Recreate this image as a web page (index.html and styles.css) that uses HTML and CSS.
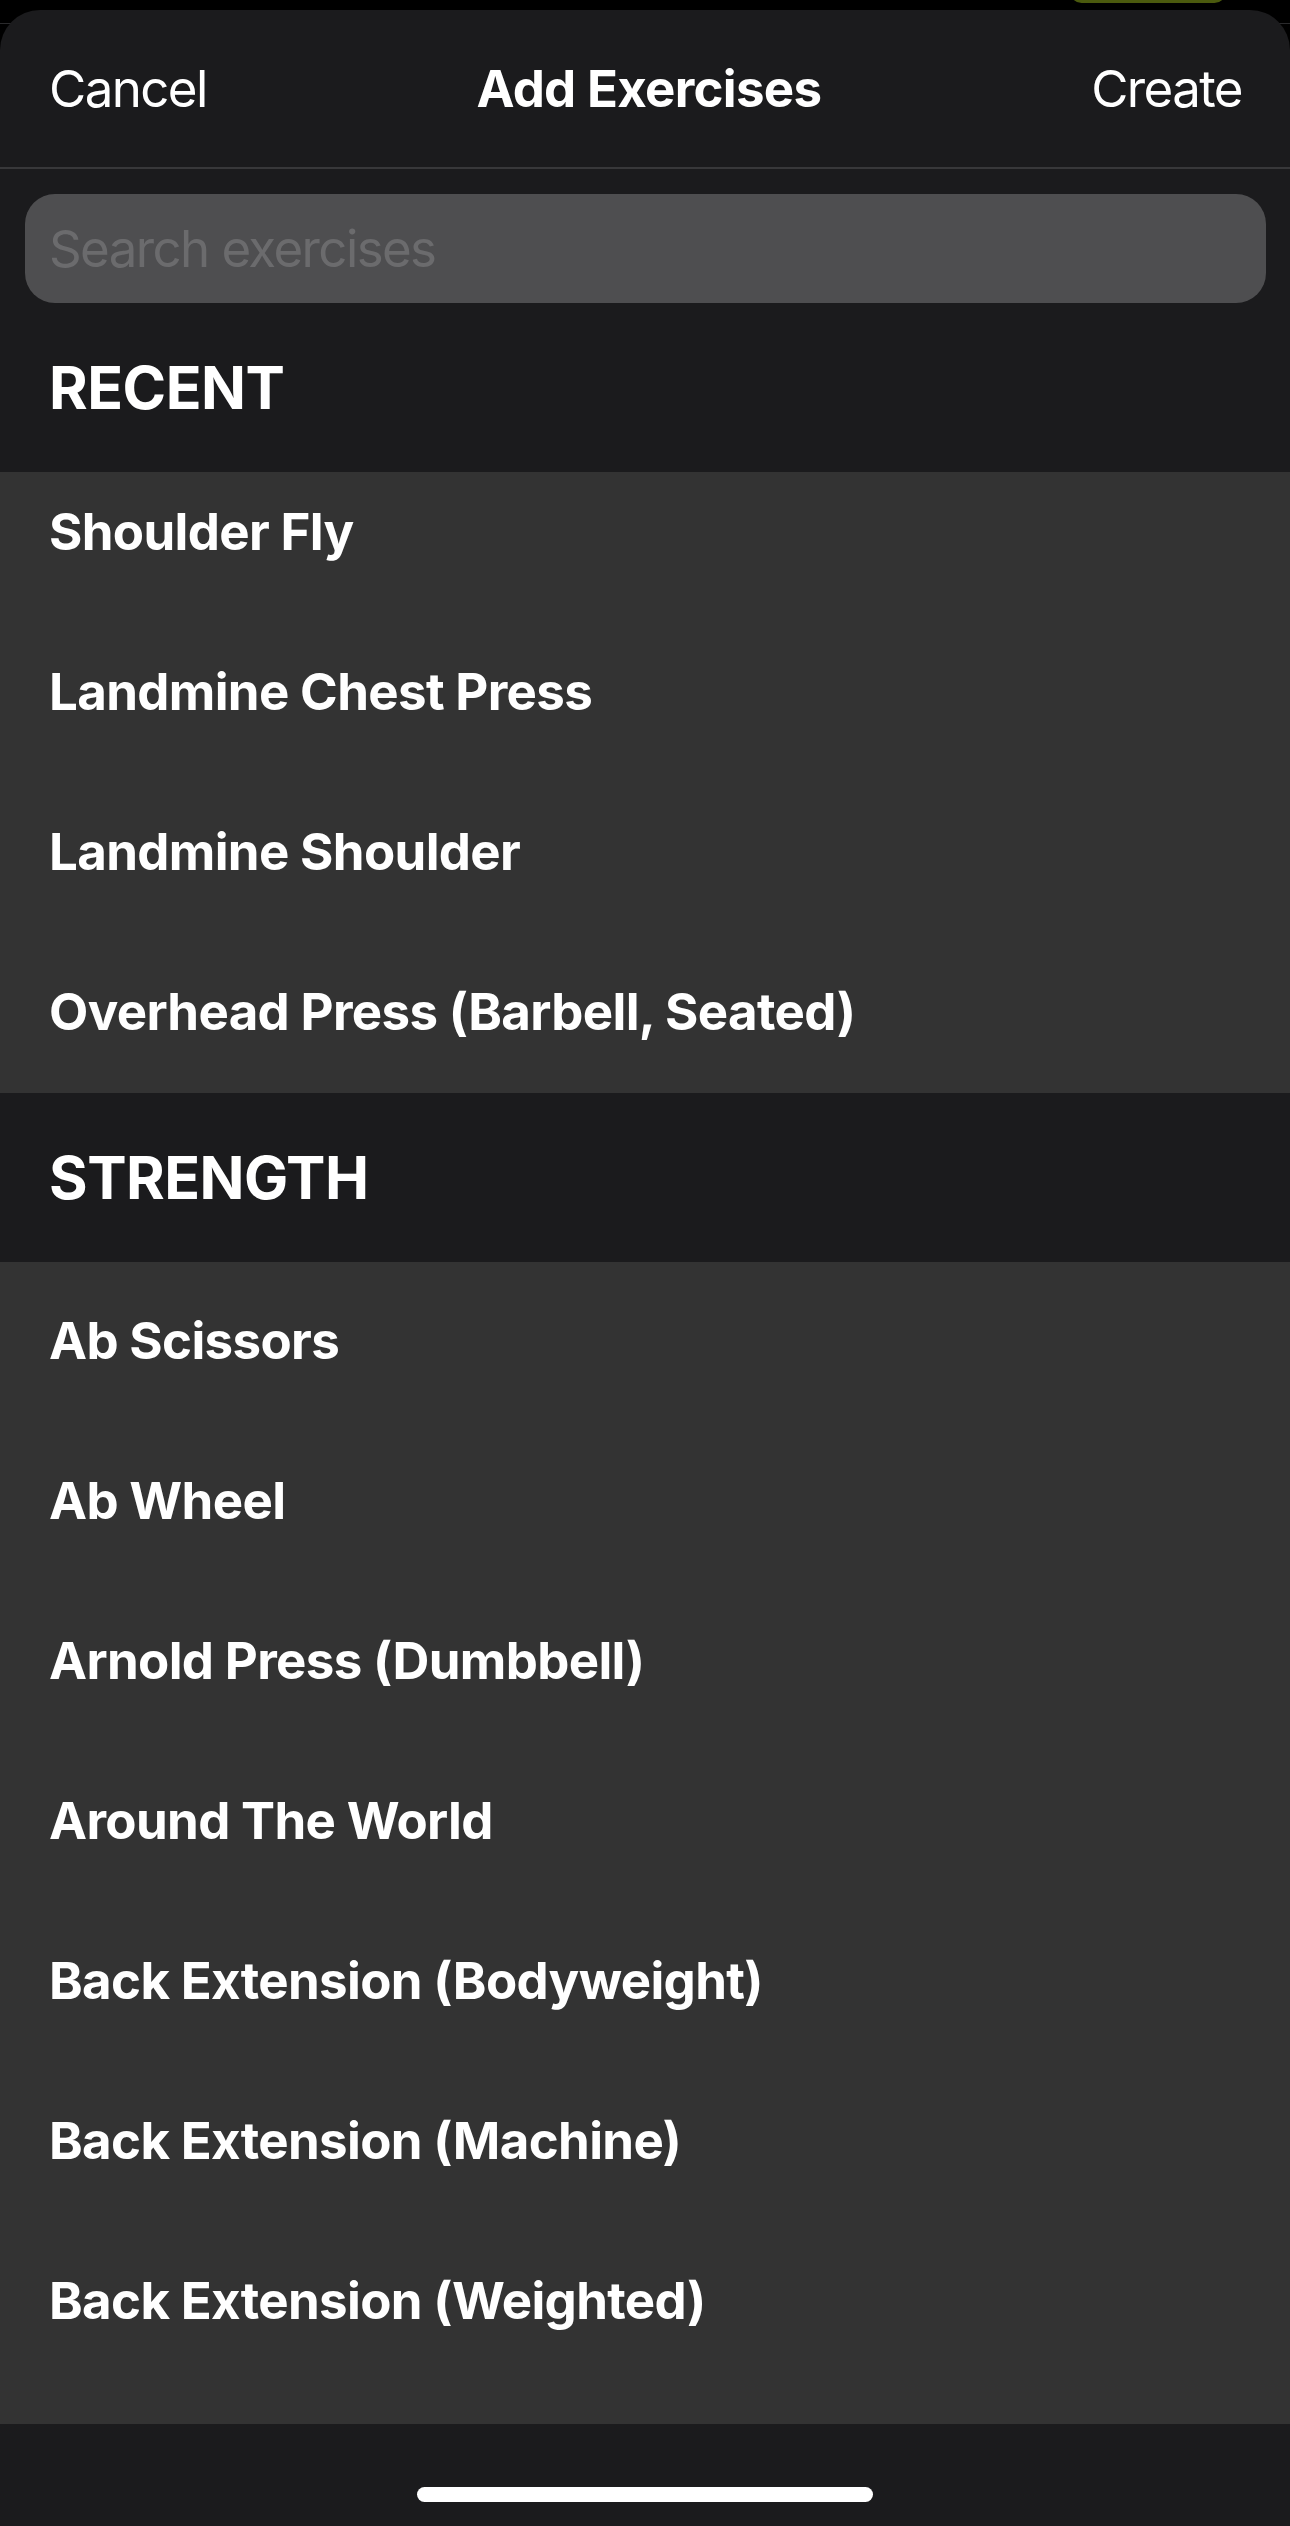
FILE: index.html
```html
<!DOCTYPE html>
<html lang="en">
<head>
<meta charset="utf-8">
<title>Add Exercises</title>
<link rel="stylesheet" href="styles.css">
</head>
<body>
<div class="backdrop">
  <div class="backdrop-pill"></div>
</div>
<div class="sheet">
  <header class="navbar">
    <span class="nav-btn">Cancel</span>
    <span class="nav-title">Add Exercises</span>
    <span class="nav-btn">Create</span>
  </header>
  <div class="divider"></div>
  <div class="search-wrap">
    <div class="search-field">Search exercises</div>
  </div>
  <div class="section-header">RECENT</div>
  <div class="list list-recent">
    <div class="list-inner scrolled">
      <div class="row">Shoulder Fly</div>
      <div class="row">Landmine Chest Press</div>
      <div class="row">Landmine Shoulder</div>
      <div class="row">Overhead Press (Barbell, Seated)</div>
    </div>
  </div>
  <div class="section-header">STRENGTH</div>
  <div class="list list-strength">
    <div class="list-inner shifted">
      <div class="row">Ab Scissors</div>
      <div class="row">Ab Wheel</div>
      <div class="row">Arnold Press (Dumbbell)</div>
      <div class="row">Around The World</div>
      <div class="row">Back Extension (Bodyweight)</div>
      <div class="row">Back Extension (Machine)</div>
      <div class="row">Back Extension (Weighted)</div>
    </div>
  </div>
  <div class="home-bar">
    <div class="home-indicator"></div>
  </div>
</div>
</body>
</html>
```

FILE: styles.css
```css
html, body {
  margin: 0;
  padding: 0;
}
body {
  background: #000;
  width: 1290px;
  height: 2526px;
  overflow: hidden;
  position: relative;
  font-family: Inter, "Liberation Sans", sans-serif;
  color: #fff;
}
.backdrop {
  position: absolute;
  top: 0;
  left: 0;
  right: 0;
  height: 24px;
  border-bottom: 1px solid #2a2a2c;
  box-sizing: border-box;
}
.backdrop-pill {
  position: absolute;
  top: -20px;
  left: 1070px;
  width: 156px;
  height: 23px;
  border-radius: 12px;
  background: #4b5a0e;
}
.sheet {
  position: relative;
  margin-top: 10px;
  height: 2516px;
  background: #1b1b1d;
  border-radius: 40px 40px 0 0;
  display: flex;
  flex-direction: column;
  overflow: hidden;
}
.navbar {
  height: 157px;
  flex: none;
  box-sizing: border-box;
  padding: 48px 48px 0 49px;
  display: flex;
  justify-content: space-between;
  align-items: flex-start;
  line-height: 62px;
  font-size: 51px;
}
.nav-btn {
  font-weight: 400;
  letter-spacing: -1.6px;
}
.nav-title {
  font-weight: 700;
  letter-spacing: -0.7px;
}
.divider {
  height: 2px;
  flex: none;
  background: #38383a;
}
.search-wrap {
  flex: none;
  padding: 25px 24px 0 25px;
}
.search-field {
  height: 109px;
  border-radius: 30px;
  background: #4e4e50;
  color: #6b6b6d;
  font-size: 51px;
  line-height: 109px;
  padding-left: 24px;
  letter-spacing: -1.6px;
}
.section-header {
  flex: none;
  height: 169px;
  display: flex;
  align-items: center;
  padding-left: 49px;
  font-size: 59px;
  font-weight: 700;
  letter-spacing: -0.5px;
  background: #1b1b1d;
}
.list {
  background: #333333;
  overflow: hidden;
}
.list-recent {
  height: 621px;
  flex: none;
}
.list-strength {
  flex: 1;
}
.scrolled {
  margin-top: -21px;
}
.shifted {
  margin-top: -2px;
}
.row {
  height: 160px;
  display: flex;
  align-items: center;
  padding-left: 49px;
  font-size: 51px;
  font-weight: 700;
  letter-spacing: -0.65px;
}
.home-bar {
  flex: none;
  height: 102px;
  background: #1b1b1d;
  display: flex;
  justify-content: center;
  padding-top: 63px;
  box-sizing: border-box;
}
.home-indicator {
  width: 456px;
  height: 15px;
  border-radius: 8px;
  background: #fff;
}
```
